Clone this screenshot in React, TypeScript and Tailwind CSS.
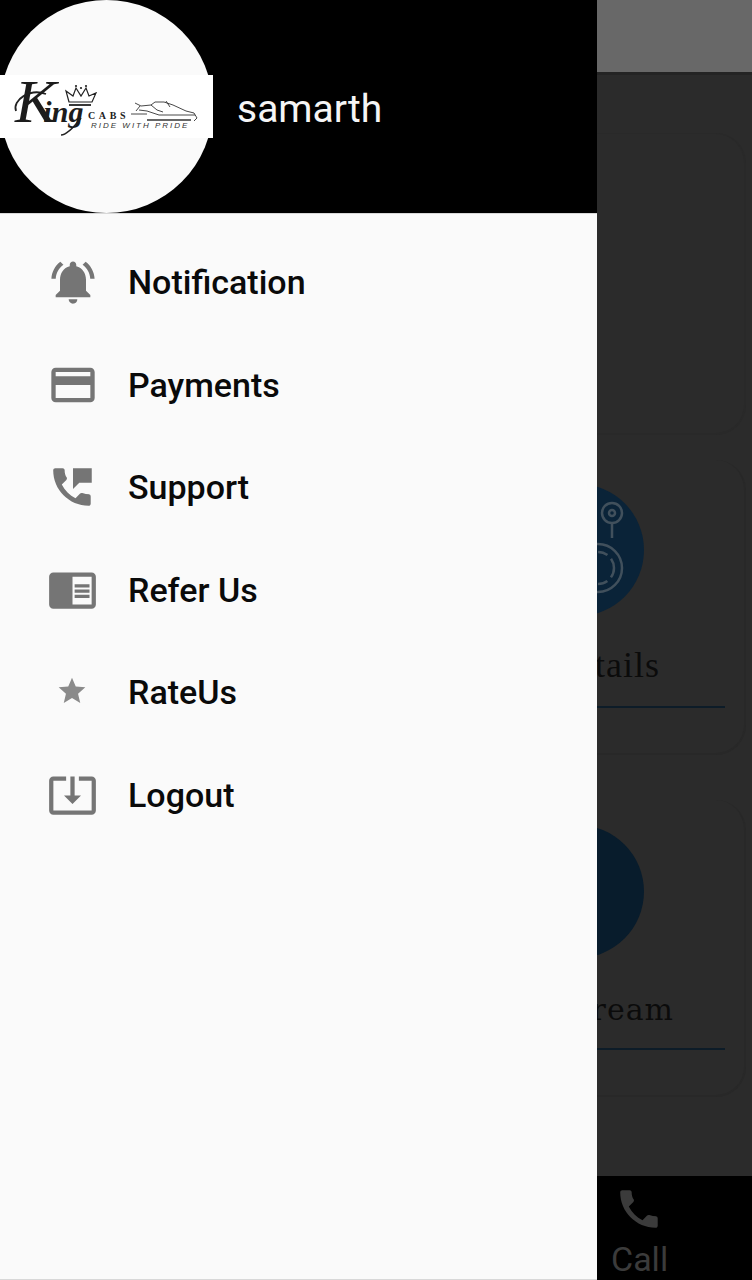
import type { ReactNode } from 'react';

const icons = {
  bell: 'M7.58 4.08L6.15 2.65C3.75 4.48 2.17 7.3 2.03 10.5h2c.15-2.65 1.51-4.97 3.55-6.42zm12.39 6.42h2c-.15-3.2-1.73-6.02-4.12-7.85l-1.42 1.43c2.02 1.45 3.39 3.77 3.54 6.42zM18 11c0-3.07-1.64-5.64-4.5-6.32V4c0-.83-.67-1.5-1.5-1.5s-1.5.67-1.5 1.5v.68C7.63 5.36 6 7.92 6 11v5l-2 2v1h16v-1l-2-2v-5zm-6 11c.14 0 .27-.01.4-.04.65-.14 1.18-.58 1.44-1.18.1-.24.15-.5.15-.78h-4c.01 1.1.9 2 2.01 2z',
  card: 'M20 4H4c-1.11 0-1.99.89-1.99 2L2 18c0 1.11.89 2 2 2h16c1.11 0 2-.89 2-2V6c0-1.11-.89-2-2-2zm0 14H4v-6h16v6zm0-10H4V6h16v2z',
  support: 'M20 15.5c-1.25 0-2.45-.2-3.57-.57-.35-.11-.74-.03-1.02.24l-2.2 2.2c-2.83-1.44-5.15-3.75-6.59-6.58l2.2-2.21c.28-.27.36-.66.25-1.01C8.2 6.45 8 5.25 8 4c0-.55-.45-1-1-1H3.5c-.55 0-1 .45-1 1 0 9.39 7.61 17 17 17 .55 0 1-.45 1-1v-3.5c0-.55-.45-1-1-1zM12 3v10l3-3h6V3h-9z',
  refer: 'M13 12h7v1.5h-7zm0-2.5h7V11h-7zm0 5h7V16h-7zM21 4H3c-1.1 0-2 .9-2 2v13c0 1.1.9 2 2 2h18c1.1 0 2-.9 2-2V6c0-1.1-.9-2-2-2zm0 15h-9V6h9v13z',
  star: 'M12 17.27L18.18 21l-1.64-7.03L22 9.24l-7.19-.61L12 2 9.19 8.63 2 9.24l5.46 4.73L5.82 21z',
  logout: 'M12 16.5l4-4h-3v-9h-2v9H8l4 4zm9-13h-6v1.99h6v14.03H3V5.49h6V3.5H3c-1.1 0-2 .9-2 2v14c0 1.1.9 2 2 2h18c1.1 0 2-.9 2-2v-14c0-1.1-.9-2-2-2z',
  phone: 'M20 15.5c-1.25 0-2.45-.2-3.57-.57-.35-.11-.74-.03-1.02.24l-2.2 2.2c-2.83-1.44-5.15-3.75-6.59-6.58l2.2-2.21c.28-.27.36-.66.25-1.01C8.2 6.45 8 5.25 8 4c0-.55-.45-1-1-1H3.5c-.55 0-1 .45-1 1 0 9.39 7.61 17 17 17 .55 0 1-.45 1-1v-3.5c0-.55-.45-1-1-1z',
};

const Icon = ({ d, className }: { d: string; className: string }) => (
  <svg viewBox="0 0 24 24" fill="currentColor" className={className}>
    <path d={d} />
  </svg>
);

const menu = [
  { label: 'Notification', icon: <Icon d={icons.bell} className="size-[52px] shrink-0 text-[#757575]" /> },
  { label: 'Payments', icon: <Icon d={icons.card} className="size-[52px] shrink-0 text-[#757575]" /> },
  { label: 'Support', icon: <Icon d={icons.support} className="size-[50px] shrink-0 text-[#757575]" /> },
  { label: 'Refer Us', icon: <Icon d={icons.refer} className="size-[51px] shrink-0 text-[#757575]" /> },
  { label: 'RateUs', icon: <Icon d={icons.star} className="mr-[2px] mb-[3px] size-[32px] shrink-0 text-[#8a8a8a]" /> },
  { label: 'Logout', icon: <Icon d={icons.logout} className="size-[51px] shrink-0 text-[#757575]" /> },
];

const Logo = () => (
  <svg viewBox="0 0 213 63" className="h-[63px] w-[213px] shrink-0">
    {/* swashes of the script K and g */}
    <path d="M16 36C12 25 30 13 46 19" fill="none" stroke="#222" strokeWidth="1.8" />
    <path d="M61 60C66 60 74 52 81 43" fill="none" stroke="#222" strokeWidth="1.5" />
    <text x="15" y="47" fill="#1c1c1c" fontFamily="'Liberation Serif', serif" fontStyle="italic">
      <tspan fontSize="62">K</tspan>
      <tspan fontSize="30" fontWeight="700" dx="-13">ing</tspan>
    </text>
    {/* crown */}
    <path d="M69 27l-3-11 7 5 3-8 5 8 5-8 3 8 7-3-4 9z" fill="none" stroke="#222" strokeWidth="1.2" />
    <path d="M69 30h22" stroke="#222" strokeWidth="1.8" />
    <circle cx="76" cy="11" r="1.1" fill="#222" />
    <circle cx="81" cy="13" r="1.1" fill="#222" />
    <circle cx="86" cy="11" r="1.1" fill="#222" />
    <text x="88" y="44" fill="#222" fontFamily="'Liberation Serif', serif" fontWeight="700" fontSize="10" letterSpacing="3.6">
      CABS
    </text>
    <text x="91" y="52.5" fill="#333" fontFamily="'Liberation Sans', sans-serif" fontStyle="italic" fontSize="8" letterSpacing="2">
      RIDE WITH PRIDE
    </text>
    {/* car */}
    <g fill="none" stroke="#333" strokeWidth="0.9">
      <path d="M131 39h16M135 28l6 3 10-1 4-3 9 0 9 3 13 6 8 2 3 5-3 3M139 35l8 1 12 4h36" />
      <path d="M140 31l-4 5M151 30l6 5 6 2M166 26l4 6" />
      <path d="M147 45h44" strokeWidth="1.4" />
    </g>
  </svg>
);

const Card = ({ className, children }: { className: string; children?: ReactNode }) => (
  <div className={`flex w-[149px] flex-col items-end rounded-r-[30px] border-r-2 border-b-2 border-[#282828] ${className}`}>
    {children}
  </div>
);

export default function App() {
  return (
    <div className="flex h-[1280px] w-[752px] overflow-hidden bg-[#2b2b2b]" style={{ fontFamily: 'Roboto, sans-serif' }}>
      <aside className="flex w-[597px] shrink-0 flex-col border-b border-[#d8d8d8] bg-[#fafafa]">
        <header className="flex h-[214px] shrink-0 items-start gap-6 border-b border-[#d8d8d8] bg-black">
          <div className="flex size-[213px] shrink-0 items-center rounded-full bg-[#fafafa]">
            <div className="flex h-[63px] w-[213px] bg-white">
              <Logo />
            </div>
          </div>
          <span className="mt-[89px] text-[39px] leading-[40px] text-[#f5f5f5]">samarth</span>
        </header>
        <nav className="flex flex-col pt-[17px]">
          {menu.map(item => (
            <div key={item.label} className="flex h-[102.5px] items-center">
              <div className="flex w-[128px] shrink-0 pl-[46px]">
                <div className="flex w-[53px] shrink-0 justify-center">{item.icon}</div>
              </div>
              <span className="text-[34px] leading-none font-medium text-[#0a0a0a]">{item.label}</span>
            </div>
          ))}
        </nav>
      </aside>

      <main className="flex min-w-0 flex-1 flex-col overflow-hidden">
        <div className="h-[75px] shrink-0 border-b-[3px] border-[#242424] bg-[#686868]" />
        <div className="flex flex-1 flex-col">
          <Card className="mt-[58px] h-[302px] border-t border-[#292929]" />

          <Card className="mt-[25px] h-[295px]">
            <div className="mt-[24px] mr-[100px] flex size-[132px] shrink-0 items-center justify-end rounded-full bg-[#0a2338]">
              <svg viewBox="0 0 64 112" fill="none" stroke="#41505c" strokeWidth="2.5" className="mr-[20px] h-[112px] w-[64px] shrink-0">
                <circle cx="52" cy="19" r="10" />
                <circle cx="52" cy="19" r="3" />
                <path d="M52 29v15" />
                <circle cx="38" cy="74" r="24" />
                <circle cx="38" cy="74" r="16" strokeDasharray="10 5" />
              </svg>
            </div>
            <span className="mt-[29px] mr-[84px] text-[36px] leading-[40px] tracking-[1px] whitespace-nowrap text-[#0b0b0b]" style={{ fontFamily: "'Liberation Serif', serif" }}>
              Details
            </span>
            <div className="mt-[21px] mr-[19px] h-[2px] w-[130px] shrink-0 bg-[#0d1c28]" />
          </Card>

          <Card className="mt-[45px] h-[297px]">
            <div className="mt-[25px] mr-[100px] flex size-[133px] shrink-0 rounded-full bg-[#081c2c]" />
            <span className="mt-[32px] mr-[70px] text-[30px] leading-[40px] tracking-[1px] whitespace-nowrap text-[#0b0b0b]" style={{ fontFamily: "'DejaVu Serif', serif" }}>
              Stream
            </span>
            <div className="mt-[18px] mr-[19px] h-[2px] w-[130px] shrink-0 bg-[#0d1c28]" />
          </Card>
        </div>
        <div className="flex h-[104px] shrink-0 flex-col items-start bg-black pl-[14px]">
          <Icon d={icons.phone} className="mt-[8px] ml-[4px] size-[50px] text-[#3b3b3b]" />
          <span className="mt-[6px] text-[34px] leading-[38px] text-[#3b3b3b]">Call</span>
        </div>
      </main>
    </div>
  );
}
